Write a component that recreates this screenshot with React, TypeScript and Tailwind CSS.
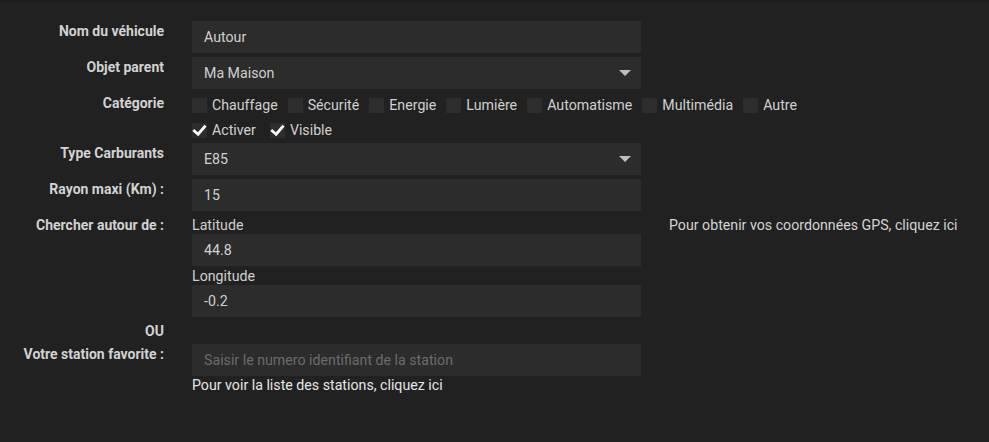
import React from 'react';

const Check = () => (
  <svg viewBox="0 0 16 16" className="w-[15px] h-[15px]">
    <path d="M2.5 8.5 L6.5 12 L13.5 4" fill="none" stroke="#ffffff" strokeWidth="3" strokeLinecap="square" />
  </svg>
);

const Box = ({ checked }: { checked?: boolean }) => (
  <span className="w-[15px] h-[15px] bg-[#2d2d2d] flex items-center justify-center shrink-0">
    {checked && <Check />}
  </span>
);

const Label = ({ children, className = '' }: { children: React.ReactNode; className?: string }) => (
  <div className={`w-[164px] shrink-0 text-right font-bold text-[14px] leading-[20px] text-[#d2d2d2] ${className}`}>
    {children}
  </div>
);

const Input = ({ value, placeholder, select }: { value?: string; placeholder?: string; select?: boolean }) => (
  <div className="w-[449px] h-[32px] bg-[#2c2c2c] flex items-center justify-between pl-[12px] pr-[10px] pt-[2px] text-[14.2px]">
    {value ? <span className="text-[#d0d0d0]">{value}</span> : <span className="text-[#6b6b6b]">{placeholder}</span>}
    {select && (
      <svg viewBox="0 0 12 7" className="w-[12px] h-[7px] -mt-[2px]">
        <path d="M0 0 L12 0 L6 6 Z" fill="#bdbdbd" />
      </svg>
    )}
  </div>
);

const Row = ({ label, children, className = '' }: { label: React.ReactNode; children: React.ReactNode; className?: string }) => (
  <div className={`flex gap-[28px] ${className}`}>
    <Label>{label}</Label>
    <div>{children}</div>
  </div>
);

const categories = ['Chauffage', 'Sécurité', 'Energie', 'Lumière', 'Automatisme', 'Multimédia', 'Autre'];

export default function App() {
  return (
    <div className="w-[989px] h-[442px] bg-[#212121] border-t-[3px] border-[#1c1c1c] font-['Roboto',sans-serif] overflow-hidden">
      <div className="pt-[18px] flex flex-col">
        <Row label="Nom du véhicule">
          <Input value="Autour" />
        </Row>
        <Row label="Objet parent" className="mt-[4px]">
          <Input value="Ma Maison" select />
        </Row>
        <Row label="Catégorie" className="pt-[4px]">
          <div className="flex flex-col">
            <div className="flex items-center h-[25px] text-[14.2px] text-[#d0d0d0]">
              {categories.map((c) => (
                <span key={c} className="flex items-center gap-[5px] mr-[10px]">
                  <Box />
                  {c}
                </span>
              ))}
            </div>
            <div className="flex items-center h-[25px] text-[14.2px] text-[#d0d0d0]">
              <span className="flex items-center gap-[5px] mr-[14px]">
                <Box checked />
                Activer
              </span>
              <span className="flex items-center gap-[5px]">
                <Box checked />
                Visible
              </span>
            </div>
          </div>
        </Row>
        <Row label="Type Carburants">
          <Input value="E85" select />
        </Row>
        <Row label="Rayon maxi (Km) :" className="mt-[4px]">
          <Input value="15" />
        </Row>
        <div className="flex mt-[4px]">
          <Label>Chercher autour de :</Label>
          <div className="ml-[28px] text-[14.2px] text-[#d0d0d0]">
            <div className="h-[19px] leading-[21px]">Latitude</div>
            <Input value="44.8" />
            <div className="h-[19px] leading-[21px]">Longitude</div>
            <Input value="-0.2" />
          </div>
          <div className="ml-[28px] pt-[1px] text-[14.2px] leading-[19px] text-[#d4d4d4]">
            Pour obtenir vos coordonnées GPS, cliquez ici
          </div>
        </div>
        <Row label="OU" className="mt-[4px] h-[23px]">
          <span />
        </Row>
        <Row label="Votre station favorite :">
          <Input placeholder="Saisir le numero identifiant de la station" />
          <div className="text-[14.2px] leading-[19px] text-[#e6e6e6]">Pour voir la liste des stations, cliquez ici</div>
        </Row>
      </div>
    </div>
  );
}
